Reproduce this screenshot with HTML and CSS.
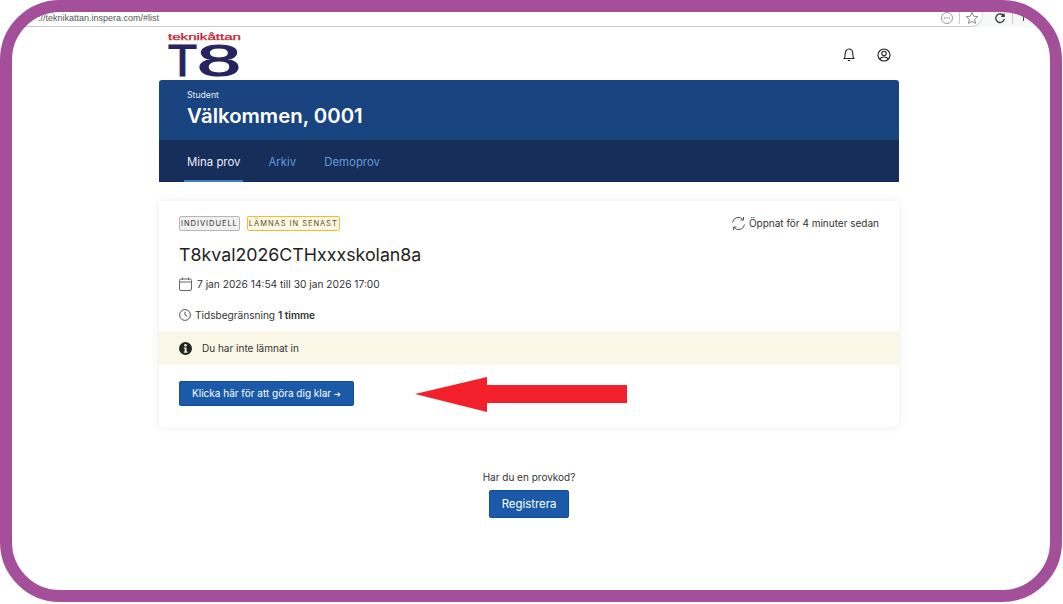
FILE: index.html
```html
<!DOCTYPE html>
<html lang="sv">
<head>
<meta charset="utf-8">
<title>Inspera</title>
<link rel="stylesheet" href="styles.css">
</head>
<body>
<div class="browser">
  <div class="urlbar">
    <span class="url">://teknikattan.inspera.com/#list</span>
    <svg class="bicon" width="14" height="14" viewBox="0 0 14 14"><circle cx="7" cy="7" r="5.500" fill="none" stroke="#999"/><circle cx="4.600" cy="7" r=".8" fill="#888"/><circle cx="7" cy="7" r=".8" fill="#888"/><circle cx="9.400" cy="7" r=".8" fill="#888"/></svg>
    <i class="bdiv"></i>
    <svg class="bicon" width="14" height="14" viewBox="0 0 14 14"><path d="M7 1.500l1.700 3.700 4 .5-3 2.700.8 4L7 10.400l-3.500 2 .8-4-3-2.700 4-.5z" fill="none" stroke="#888"/></svg>
  </div>
  <div class="tools">
    <svg width="12" height="12" viewBox="0 0 14 14"><path d="M11.500 5A5 5 0 1 0 12 8M11.800 1.800V5H8.600" fill="none" stroke="#333" stroke-width="1.500"/></svg>
    <i class="bdiv"></i>
    <i class="tool-stub"></i>
  </div>
</div>

<div class="page">
  <div class="topbar">
    <svg class="logo" width="73" height="44" viewBox="0 0 73 44">
      <text class="logo-word" x="0" y="7" textLength="73" lengthAdjust="spacingAndGlyphs">teknikåttan</text>
      <text class="logo-mark" x="0" y="43" textLength="29" lengthAdjust="spacingAndGlyphs">T</text>
      <text class="logo-mark" x="29" y="43" textLength="44" lengthAdjust="spacingAndGlyphs">8</text>
    </svg>
    <div class="top-icons">
      <svg width="14" height="16" viewBox="0 0 14 16"><path d="M2 11.500c1-1 1.200-2.200 1.200-4.500C3.200 4 4.800 2 7 2s3.800 2 3.800 5c0 2.300.2 3.500 1.200 4.500z M5.800 13.500h2.400" fill="none" stroke="#222" stroke-width="1.100" stroke-linejoin="round"/></svg>
      <svg width="14" height="14" viewBox="0 0 14 14"><circle cx="7" cy="7" r="6" fill="none" stroke="#222" stroke-width="1.100"/><circle cx="7" cy="5.500" r="2.200" fill="none" stroke="#222" stroke-width="1.100"/><path d="M2.800 11c.8-1.500 2.400-2 4.200-2s3.400.5 4.200 2" fill="none" stroke="#222" stroke-width="1.100"/></svg>
    </div>
  </div>

  <header class="hero">
    <div class="hero-top">
      <div class="role">Student</div>
      <h1 class="welcome">Välkommen, 0001</h1>
    </div>
    <nav class="tabs">
      <a class="tab active">Mina prov</a>
      <a class="tab">Arkiv</a>
      <a class="tab">Demoprov</a>
    </nav>
  </header>

  <section class="card">
    <div class="card-head">
      <div class="badges">
        <span class="badge grey">INDIVIDUELL</span>
        <span class="badge amber">LÄMNAS IN SENAST</span>
      </div>
      <div class="opened">
        <svg width="15" height="15" viewBox="0 0 15 15"><path d="M1.500 6.500A6 6 0 0 1 12 3.500M13.500 8.500A6 6 0 0 1 3 11.500M12.500 1v3h-3M2.500 14v-3h3" fill="none" stroke="#555"/></svg>
        <span>Öppnat för 4 minuter sedan</span>
      </div>
    </div>
    <h2 class="title">T8kval2026CTHxxxskolan8a</h2>
    <div class="meta date">
      <svg width="13" height="14" viewBox="0 0 13 14"><rect x=".5" y="2" width="12" height="11.500" rx="1.500" fill="none" stroke="#666"/><path d="M.5 5h12M3.500 .5v2.500M9.500 .5v2.500" fill="none" stroke="#666"/></svg>
      <span>7 jan 2026 14:54 till 30 jan 2026 17:00</span>
    </div>
    <div class="meta time">
      <svg width="12" height="12" viewBox="0 0 12 12"><circle cx="6" cy="6" r="5.400" fill="none" stroke="#555"/><path d="M6 2.800V6l2.300 1.300" fill="none" stroke="#555"/></svg>
      <span>Tidsbegränsning <b>1 timme</b></span>
    </div>
    <div class="notice">
      <svg width="13" height="13" viewBox="0 0 13 13"><circle cx="6.500" cy="6.500" r="6.500" fill="#222"/><circle cx="6.500" cy="3.300" r="1.300" fill="#fbf7e6"/><path d="M4.800 5.400h2.700v4.200h1v1.200H4.700V9.600h1V6.600h-.9z" fill="#fbf7e6"/></svg>
      <span>Du har inte lämnat in</span>
    </div>
    <div class="actions">
      <a class="btn start">Klicka här för att göra dig klar <span class="go">➔</span></a>
    </div>
  </section>

  <div class="code">
    <p class="code-q">Har du en provkod?</p>
    <a class="btn register">Registrera</a>
  </div>
</div>

<svg class="arrow" width="212" height="35" viewBox="0 0 212 35"><polygon points="0,17 72,0 72,8 212,8 212,26 72,26 72,35" fill="#f1202a"/></svg>
<div class="frame"></div>
</body>
</html>
```
FILE: styles.css
```css
* { box-sizing: border-box; }
html, body { margin: 0; height: 100%; background: #fff; overflow: hidden; }
body { font-family: Inter, "Liberation Sans", sans-serif; color: #222; position: relative; }

.browser { display: flex; height: 27px; background: #f7f8f8; }
.urlbar {
  width: 983px; display: flex; align-items: center; gap: 5px;
  padding: 9px 0 0 38px; background: #fff;
  border-bottom: 1px solid #c9c9c9; border-right: 1px solid #ddd;
  border-bottom-right-radius: 12px;
}
.url { font: 9px "Liberation Sans", sans-serif; color: #555; flex: 1; white-space: nowrap; }
.bicon { flex: none; }
.urlbar .bicon:last-child { margin-right: 3px; }
.bdiv { width: 1px; height: 12px; background: #ccc; display: block; }
.tools { display: flex; align-items: center; gap: 6px; padding: 8px 0 0 11px; }
.tool-stub { width: 5px; height: 7px; margin-left: 4px; border-left: 1px solid #444; border-top: 1px solid #444; display: block; }

.page { width: 740px; margin-left: 159px; }

.topbar { height: 53px; display: flex; justify-content: space-between; align-items: flex-start; padding: 6px 8px 0 9px; }
.logo { display: block; overflow: visible; }
.logo-word { font: 400 8.500px "Liberation Sans", sans-serif; fill: #c8202f; stroke: #c8202f; stroke-width: .25px; }
.logo-mark { font: 400 45px "Liberation Sans", sans-serif; fill: #28245f; stroke: #28245f; stroke-width: 1.200px; }
.top-icons { display: flex; gap: 21px; align-items: center; padding-top: 14px; }

.hero { background: #1a4480; border-radius: 3px 3px 0 0; color: #fff; }
.hero-top { height: 60px; padding: 10px 28px 0; }
.role { font-size: 8.700px; line-height: 11px; color: #e6ecf5; }
.welcome { margin: 2px 0 0; font-size: 20.350px; line-height: 26px; font-weight: 600; }
.tabs { height: 42px; background: #182e5a; display: flex; gap: 22px; padding: 0 25px; }
.tab { height: 42px; padding: 14px 3px 0; font-size: 11.400px; line-height: 16px; color: #5b9bd8; border-bottom: 2px solid transparent; }
.tab.active { color: #e8eef6; border-bottom-color: #3a7fc4; }

.card {
  margin-top: 19px; height: 226px; background: #fff; border-radius: 3px;
  box-shadow: 0 0 8px rgba(30, 50, 90, .09);
}
.card-head { display: flex; justify-content: space-between; align-items: flex-start; padding: 15px 20px 0; height: 42px; }
.badges { display: flex; gap: 7px; }
.badge {
  height: 15px; padding: 0 1px; font-size: 7.500px; line-height: 13px; letter-spacing: .96px;
  font-weight: 400; border: 1px solid; border-radius: 2px; white-space: nowrap;
}
.badge.grey { background: #f0f0f0; border-color: #b5b5b5; color: #333; }
.badge.amber { background: #fff8e3; border-color: #f2b93b; color: #5b4a1c; }
.opened { display: flex; align-items: center; gap: 3px; font-size: 10px; line-height: 15px; color: #333; }
.title { margin: 0 20px; font-size: 17.800px; line-height: 24px; font-weight: 400; color: #222; }
.meta { display: flex; align-items: center; margin: 0 20px; line-height: 14px; color: #333; white-space: nowrap; }
.date { margin-top: 10px; gap: 5px; font-size: 10.200px; }
.time { margin-top: 17px; gap: 4px; font-size: 10.100px; }
.time b { font-weight: 600; }
.notice {
  margin-top: 9px; height: 34px; background: #fbf7e6; display: flex; align-items: center;
  gap: 10px; padding-left: 20px; font-size: 10px; color: #333;
}
.actions { padding: 16px 20px 0; }
.btn { display: inline-block; background: #1a5aa8; color: #fff; border: 1px solid #164c8f; border-radius: 2px; text-align: center; }
.start { width: 175px; height: 25px; font-size: 10px; line-height: 23px; }
.go { font-size: 8px; }

.code { margin-top: 43px; display: flex; flex-direction: column; align-items: center; }
.code-q { margin: 0 0 6px; font-size: 10px; line-height: 14px; color: #333; }
.register { width: 80px; height: 28px; font-size: 11.400px; line-height: 26px; }

.arrow { position: absolute; left: 415px; top: 377px; }
.frame {
  position: absolute; left: 0; top: 0; width: 1062px; height: 602px;
  border: 12px solid #a34f9a; border-radius: 60px; pointer-events: none;
  box-shadow: 0 0 0 40px #fff;
}
```
